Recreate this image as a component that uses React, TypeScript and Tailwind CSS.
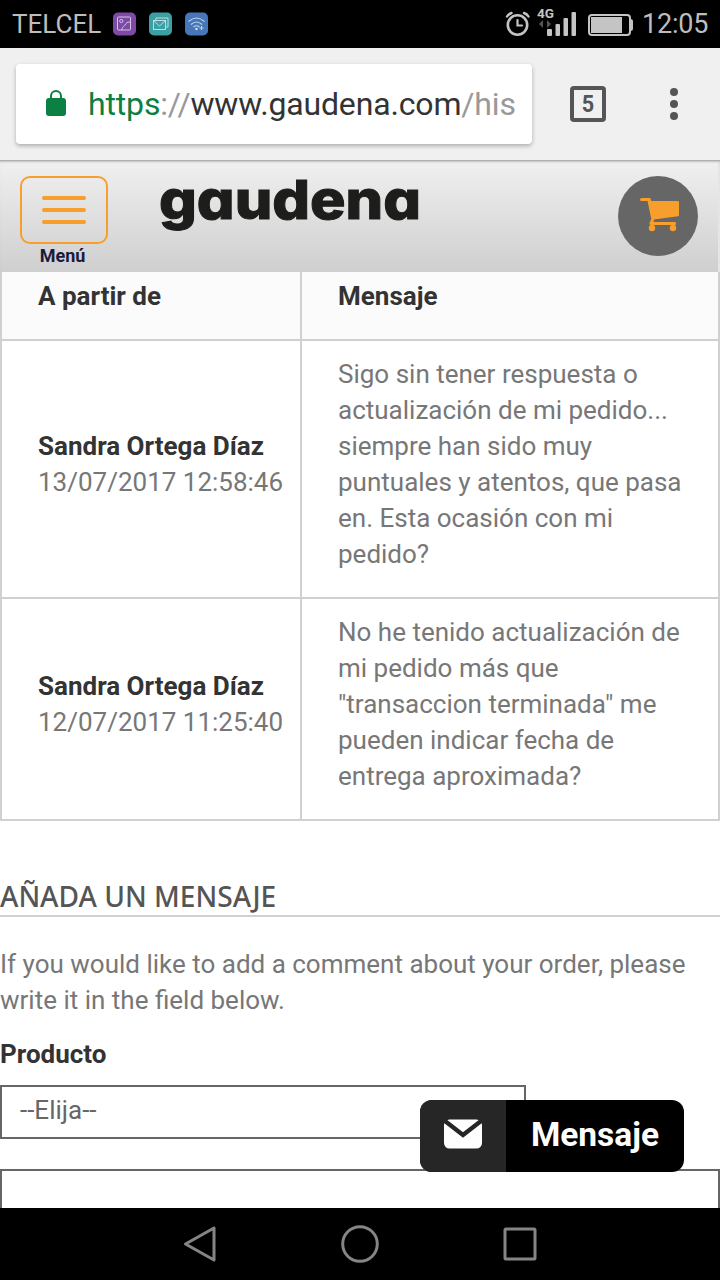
import React from "react";

function StatusBar() {
  return (
    <header className="flex h-12 w-full shrink-0 items-center bg-black text-[#bdbdbd]">
      <div className="w-[101px] pl-3 text-[26px] leading-[48px] font-normal whitespace-nowrap">
        TELCEL
      </div>
      <svg className="ml-3 h-6 w-24 shrink-0" viewBox="0 0 96 24" fill="none">
        <rect x="0" y="0.5" width="23" height="23" rx="5" fill="#7d4aa5" />
        <g stroke="#d6c3e2" strokeWidth="1">
          <rect x="4.5" y="5" width="13" height="13" rx="1" />
          <circle cx="8.3" cy="9" r="1.6" />
          <path d="M9 18c0-4 2-3 3-5s2-3 5-3" />
        </g>
        <rect x="36" y="0.5" width="23" height="23" rx="5" fill="#3b9fa3" />
        <g stroke="#b9dfe0" strokeWidth="1">
          <path d="M43 8V6h12v9h-2" />
          <rect x="40.5" y="8.500" width="12" height="9" />
          <path d="m40.500 8.500 6 5.500 6-5.500" />
        </g>
        <rect x="72" y="0.5" width="23" height="23" rx="5" fill="#4777b8" />
        <g stroke="#c3d4ea" strokeWidth="1.100">
          <path d="M75.500 9.500q8-7 16 0M78 12.500q5.500-5 11 0M80.500 15q3-2.500 6 0" />
          <path d="M88.500 14v4M86.500 16h4" />
        </g>
        <circle cx="83.500" cy="17" r="1.200" fill="#d5e1f0" />
      </svg>
      <svg className="ml-auto h-12 w-[144px] shrink-0" viewBox="0 0 144 48" fill="none">
        <g stroke="#c4c4c4" strokeLinecap="round">
          <circle cx="27.500" cy="25" r="9.700" strokeWidth="2.600" />
          <path d="M27.500 20v5.500H32" strokeWidth="2.200" />
          <path d="M17 16.500q1.500-2.500 4.500-3.500M38.500 16.500q-1.500-2.500-4.500-3.500" strokeWidth="2.400" />
        </g>
        <text x="47" y="18" fontSize="13" fontWeight="700" fill="#c4c4c4" textLength="17" lengthAdjust="spacingAndGlyphs">
          4G
        </text>
        <path d="m53 20-4 4 4 4zM57 20l4 4-4 4z" fill="#555" />
        <g fill="#c4c4c4">
          <rect x="57" y="29" width="5" height="7" rx="1" />
          <rect x="65.500" y="24" width="4.500" height="12" rx="1" />
          <rect x="73.500" y="18" width="4.500" height="18" rx="1" />
          <rect x="81.500" y="12" width="4.500" height="24" rx="1" />
          <rect x="101" y="17" width="31" height="16" />
          <path d="M139 19h1.500q2.500 0 2.500 2v8q0 2-2.500 2H139z" />
        </g>
        <rect x="99" y="15" width="41" height="20" rx="3" stroke="#c4c4c4" strokeWidth="2" />
      </svg>
      <div className="ml-1.5 w-[80px] pl-0.5 text-[27px] leading-[50px] font-normal tracking-[-0.2px] whitespace-nowrap">
        12:05
      </div>
    </header>
  );
}

function BrowserBar() {
  return (
    <div className="flex h-[112px] w-full shrink-0 items-center bg-[#f0f0f0] pl-4">
      <div className="flex h-20 w-[516px] items-center rounded-[4px] bg-white pl-[30px] shadow-[0_2px_4px_rgba(0,0,0,0.28)]">
        <svg className="h-7 w-5 shrink-0" viewBox="0 0 20 28" fill="none">
          <rect x="0" y="8" width="20" height="18" rx="3" fill="#0b8043" />
          <path d="M5 9V6a5 5 0 0 1 10 0v3" stroke="#0b8043" strokeWidth="2" />
        </svg>
        <div className="ml-[22px] w-[429px] overflow-hidden text-[32px] leading-[80px] tracking-[-0.16px] whitespace-nowrap text-[#999]">
          <span className="text-[#0b8043]">https</span>://
          <span className="text-[#333]">www.gaudena.com</span>/his
        </div>
      </div>
      <div className="ml-[38px] flex h-9 w-9 items-center justify-center rounded-[4px] border-4 border-[#555]">
        <span className="scale-x-[.9] text-[24px] leading-7 font-bold text-[#555]">5</span>
      </div>
      <div className="ml-16 flex flex-col gap-1">
        <i className="h-2 w-2 rounded-full bg-[#555]" />
        <i className="h-2 w-2 rounded-full bg-[#555]" />
        <i className="h-2 w-2 rounded-full bg-[#555]" />
      </div>
    </div>
  );
}

function SiteHeader() {
  return (
    <div className="flex h-[112px] w-full shrink-0 items-start border-t border-[#b0b0b0] bg-linear-to-b from-[#f0f0f0] to-[#cfcfcf] pl-5 shadow-[inset_0_2px_2px_-1px_rgba(0,0,0,0.2),inset_-2px_0_0_#e6e6e6]">
      <button className="mt-[15px] flex w-[88px] flex-col items-center">
        <span className="flex h-[68px] w-[88px] flex-col items-center justify-center gap-2 rounded-[10px] border-2 border-[#f89e2d]">
          <i className="h-1 w-11 rounded-sm bg-[#f89e2d]" />
          <i className="h-1 w-11 rounded-sm bg-[#f89e2d]" />
          <i className="h-1 w-11 rounded-sm bg-[#f89e2d]" />
        </span>
        <span className="pr-[3px] text-[18px] leading-6 font-bold tracking-[-0.1px] text-[#1c1b3a]">Menú</span>
      </button>
      <svg className="ml-[50px] h-[80px] w-[266px] shrink-0" viewBox="0 0 266 80">
        <text
          x="1"
          y="58"
          fontSize="54"
          fontWeight="800"
          fill="#1d1d1b"
          stroke="#1d1d1b"
          strokeWidth="1"
          textLength="262"
          lengthAdjust="spacingAndGlyphs"
          className="[font-family:Inter,sans-serif] [font-feature-settings:'cv11'_1]"
        >
          gaudena
        </text>
      </svg>
      <button className="mt-[15px] ml-[194px] h-20 w-20 shrink-0 rounded-full bg-[#666]">
        <svg viewBox="0 0 80 80" fill="#f89e2d">
          <path d="M23.500 22h8q1 0 1.200 1l.6 2H60q1 0 1 1v13q0 1-1 1.200L36 43.500l-.5 2.500H57q1 0 1 1.500t-1 1.500H33q-2 0-1.500-2l1.800-4L29.500 25h-6q-1.500 0-1.500-1.500T23.500 22Z" />
          <circle cx="34" cy="52" r="3.200" />
          <circle cx="55" cy="52" r="3.200" />
        </svg>
      </button>
    </div>
  );
}

function MessageRow({ name, date, lines }: { name: string; date: string; lines: string[] }) {
  return (
    <div className="flex border-b-2 border-[#d0d0d0]">
      <div className="flex flex-col justify-center border-r-2 border-[#d0d0d0] pt-[15px] pb-[25px] pl-9">
        <div className="font-bold text-[#333]">{name}</div>
        <div className="whitespace-nowrap">{date}</div>
      </div>
      <div className="pt-[15px] pb-[25px] pl-9 whitespace-nowrap">
        {lines.map((line) => (
          <div key={line}>{line}</div>
        ))}
      </div>
    </div>
  );
}

function MessagesTable() {
  return (
    <div className="border-x-2 border-[#d0d0d0] [&>div>div:first-child]:w-[300px]">
      <div className="flex border-b-2 border-[#d0d0d0] bg-[#fbfbfb] font-bold text-[#333]">
        <div className="border-r-2 border-[#d0d0d0] pt-[6px] pb-[25px] pl-9">A partir de</div>
        <div className="pt-[6px] pb-[25px] pl-9">Mensaje</div>
      </div>
      <MessageRow
        name="Sandra Ortega Díaz"
        date="13/07/2017 12:58:46"
        lines={[
          "Sigo sin tener respuesta o",
          "actualización de mi pedido...",
          "siempre han sido muy",
          "puntuales y atentos, que pasa",
          "en. Esta ocasión con mi",
          "pedido?",
        ]}
      />
      <MessageRow
        name="Sandra Ortega Díaz"
        date="12/07/2017 11:25:40"
        lines={[
          "No he tenido actualización de",
          "mi pedido más que",
          '"transaccion terminada" me',
          "pueden indicar fecha de",
          "entrega aproximada?",
        ]}
      />
    </div>
  );
}

function MessageForm() {
  return (
    <section className="pt-[55px]">
      <h3 className="h-[41px] border-b-2 border-[#d0d0d0] text-[28px] leading-[41px] font-medium whitespace-nowrap text-[#555] [font-family:'Noto_Sans',sans-serif]">
        <span className="inline-block origin-left scale-x-[1.003]">AÑADA UN MENSAJE</span>
      </h3>
      <p className="mt-[29px] whitespace-nowrap">
        If you would like to add a comment about your order, please
        <br />
        write it in the field below.
      </p>
      <div className="mt-[18px] font-bold text-[#333]">Producto</div>
      <div className="mt-[13px] h-[54px] w-[526px] border-2 border-[#666] pl-[18px] leading-[46px] text-[#666]">
        --Elija--
      </div>
      <div className="mt-[30px] h-[60px] w-full border-2 border-[#666]" />
    </section>
  );
}

function MessageButton() {
  return (
    <button className="absolute top-[1100px] left-[420px] flex h-[72px] w-[264px] overflow-hidden rounded-[12px] bg-black text-white">
      <span className="flex h-full w-[86px] items-center justify-center bg-[#262626]">
        <svg className="mb-1 h-[30px] w-[38px]" viewBox="0 0 38 30">
          <rect y="0.5" width="38" height="29" rx="5.500" fill="currentColor" />
          <path d="M-1 0.500 19 16 39 0.500" fill="none" stroke="#262626" strokeWidth="4.400" />
        </svg>
      </span>
      <span className="w-[178px] text-center text-[33.5px] leading-[70px] font-bold">Mensaje</span>
    </button>
  );
}

function NavigationBar() {
  return (
    <nav className="flex h-[72px] shrink-0 items-center justify-center bg-black">
      <svg className="h-10 w-[360px]" viewBox="0 0 360 40" fill="none" stroke="#858585" strokeWidth="3" strokeLinejoin="round">
        <path d="M5.500 20 34 4v32Z" />
        <circle cx="180" cy="20" r="17.300" />
        <rect x="325" y="5" width="30" height="30" rx="1" />
      </svg>
    </nav>
  );
}

export default function App() {
  return (
    <div className="relative flex h-[1280px] w-[720px] flex-col overflow-hidden bg-white [font-family:Roboto,sans-serif]">
      <StatusBar />
      <BrowserBar />
      <SiteHeader />
      <main className="min-h-0 flex-1 overflow-hidden text-[26px] leading-9 text-[#777]">
        <MessagesTable />
        <MessageForm />
      </main>
      <MessageButton />
      <NavigationBar />
    </div>
  );
}
